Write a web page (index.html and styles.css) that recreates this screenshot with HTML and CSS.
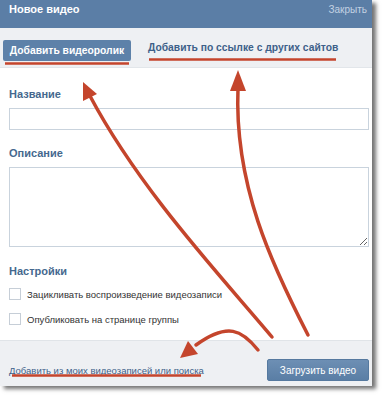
FILE: index.html
```
<html>

<head>
    <meta charset="utf-8">
    <link rel="stylesheet" href="styles.css">
</head>

<body>
    <div class="box">
        <div class="title">
            <span class="title-text">Новое видео</span>
            <a class="close">Закрыть</a>
        </div>
        <div class="tabs">
            <span class="tab active">Добавить видеоролик</span>
            <a class="tab">Добавить по ссылке с других сайтов</a>
        </div>
        <div class="content">
            <div class="label">Название</div>
            <input class="field" type="text">
            <div class="label">Описание</div>
            <textarea class="field area"></textarea>
            <div class="label">Настройки</div>
            <label class="check"><input type="checkbox"> Зацикливать воспроизведение видеозаписи</label>
            <label class="check"><input type="checkbox"> Опубликовать на странице группы</label>
        </div>
        <div class="footer">
            <a class="more">Добавить из моих видеозаписей или поиска</a>
            <button class="upload">Загрузить видео</button>
        </div>
    </div>

    <svg class="marks" width="389" height="400" viewBox="0 0 389 400">
        <g stroke="#c4452c" stroke-width="2.5" fill="none">
            <line x1="5" y1="63.5" x2="129" y2="63.5" />
            <line x1="149" y1="59.5" x2="336" y2="59.5" />
            <line x1="12" y1="375.5" x2="201" y2="375.5" />
        </g>
        <g stroke="#c4452c" stroke-width="3.5" fill="none" stroke-linecap="round">
            <path d="M272,337 C220,275 140,190 90,96" />
            <path d="M308,335 C272,265 234,185 238,88" />
            <path d="M258,350 C242,330 228,322 196,345" />
        </g>
        <g fill="#c4452c">
            <polygon points="83,82 97,94 83,101" />
            <polygon points="238,70 246,91 230,91" />
            <polygon points="180,358 188,341 198,354" />
        </g>
    </svg>
</body>

</html>
```

FILE: styles.css
```
body {
    margin: 0;
    background-color: white;
    font-family: "Liberation Sans", Arial, sans-serif;
    font-size: 9.5px;
}

.box {
    width: 372px;
    height: 386px;
    display: flex;
    flex-direction: column;
    background-color: white;
    box-shadow: 4px 3px 4px rgba(0, 0, 0, 0.55);
}

.title {
    height: 28px;
    padding: 3px 5px 0 9px;
    display: flex;
    align-items: flex-start;
    justify-content: space-between;
    background-color: #5b7ea6;
    box-sizing: border-box;
}

.title-text {
    color: white;
    font-weight: bold;
    font-size: 11px;
}

.close {
    color: #c3d2e3;
    font-size: 10px;
    margin-top: 1px;
}

.tabs {
    height: 40px;
    padding: 0 3px;
    display: flex;
    align-items: center;
    background-color: #eef0f3;
    border-bottom: 1px solid #e2e6ea;
    box-sizing: border-box;
}

.tab {
    font-weight: bold;
    font-size: 10.3px;
    color: #3d6089;
}

.tab.active {
    width: 128px;
    height: 21px;
    margin-top: 6px;
    margin-right: 17px;
    line-height: 21px;
    text-align: center;
    color: white;
    background-color: #5d81a9;
    border-radius: 2px;
}

.tabs a.tab {
    margin-top: -1px;
}

.content {
    flex: 1;
    padding: 20px 3px 0 9px;
    display: flex;
    flex-direction: column;
}

.label {
    font-weight: bold;
    font-size: 11px;
    color: #45688e;
    margin-bottom: 8px;
}

.field {
    width: 360px;
    height: 22px;
    margin: 0 0 17px;
    border: 1px solid #c9d3dd;
    box-sizing: border-box;
    font-family: inherit;
}

.area {
    height: 80px;
    margin-bottom: 18px;
}

.check {
    display: flex;
    align-items: center;
    height: 12px;
    margin: 3px 0 10px;
    color: #333;
    gap: 6px;
}

.check input {
    appearance: none;
    width: 12px;
    height: 12px;
    margin: 0;
    border: 1px solid #c6ced7;
    background-color: white;
}

.footer {
    height: 46px;
    padding: 0 3px 0 9px;
    display: flex;
    align-items: center;
    justify-content: space-between;
    background-color: #eef0f3;
    border-top: 1px solid #e0e4e8;
    box-sizing: border-box;
}

.more {
    color: #3d6089;
    margin-top: 13px;
}

.upload {
    width: 102px;
    height: 22px;
    margin-top: 13px;
    border: 1px solid #55799f;
    border-radius: 2px;
    background: linear-gradient(#6d8fb4, #5a7ea5);
    color: white;
    font-family: inherit;
    font-size: 10px;
}

.marks {
    position: absolute;
    left: 0;
    top: 0;
}
```
